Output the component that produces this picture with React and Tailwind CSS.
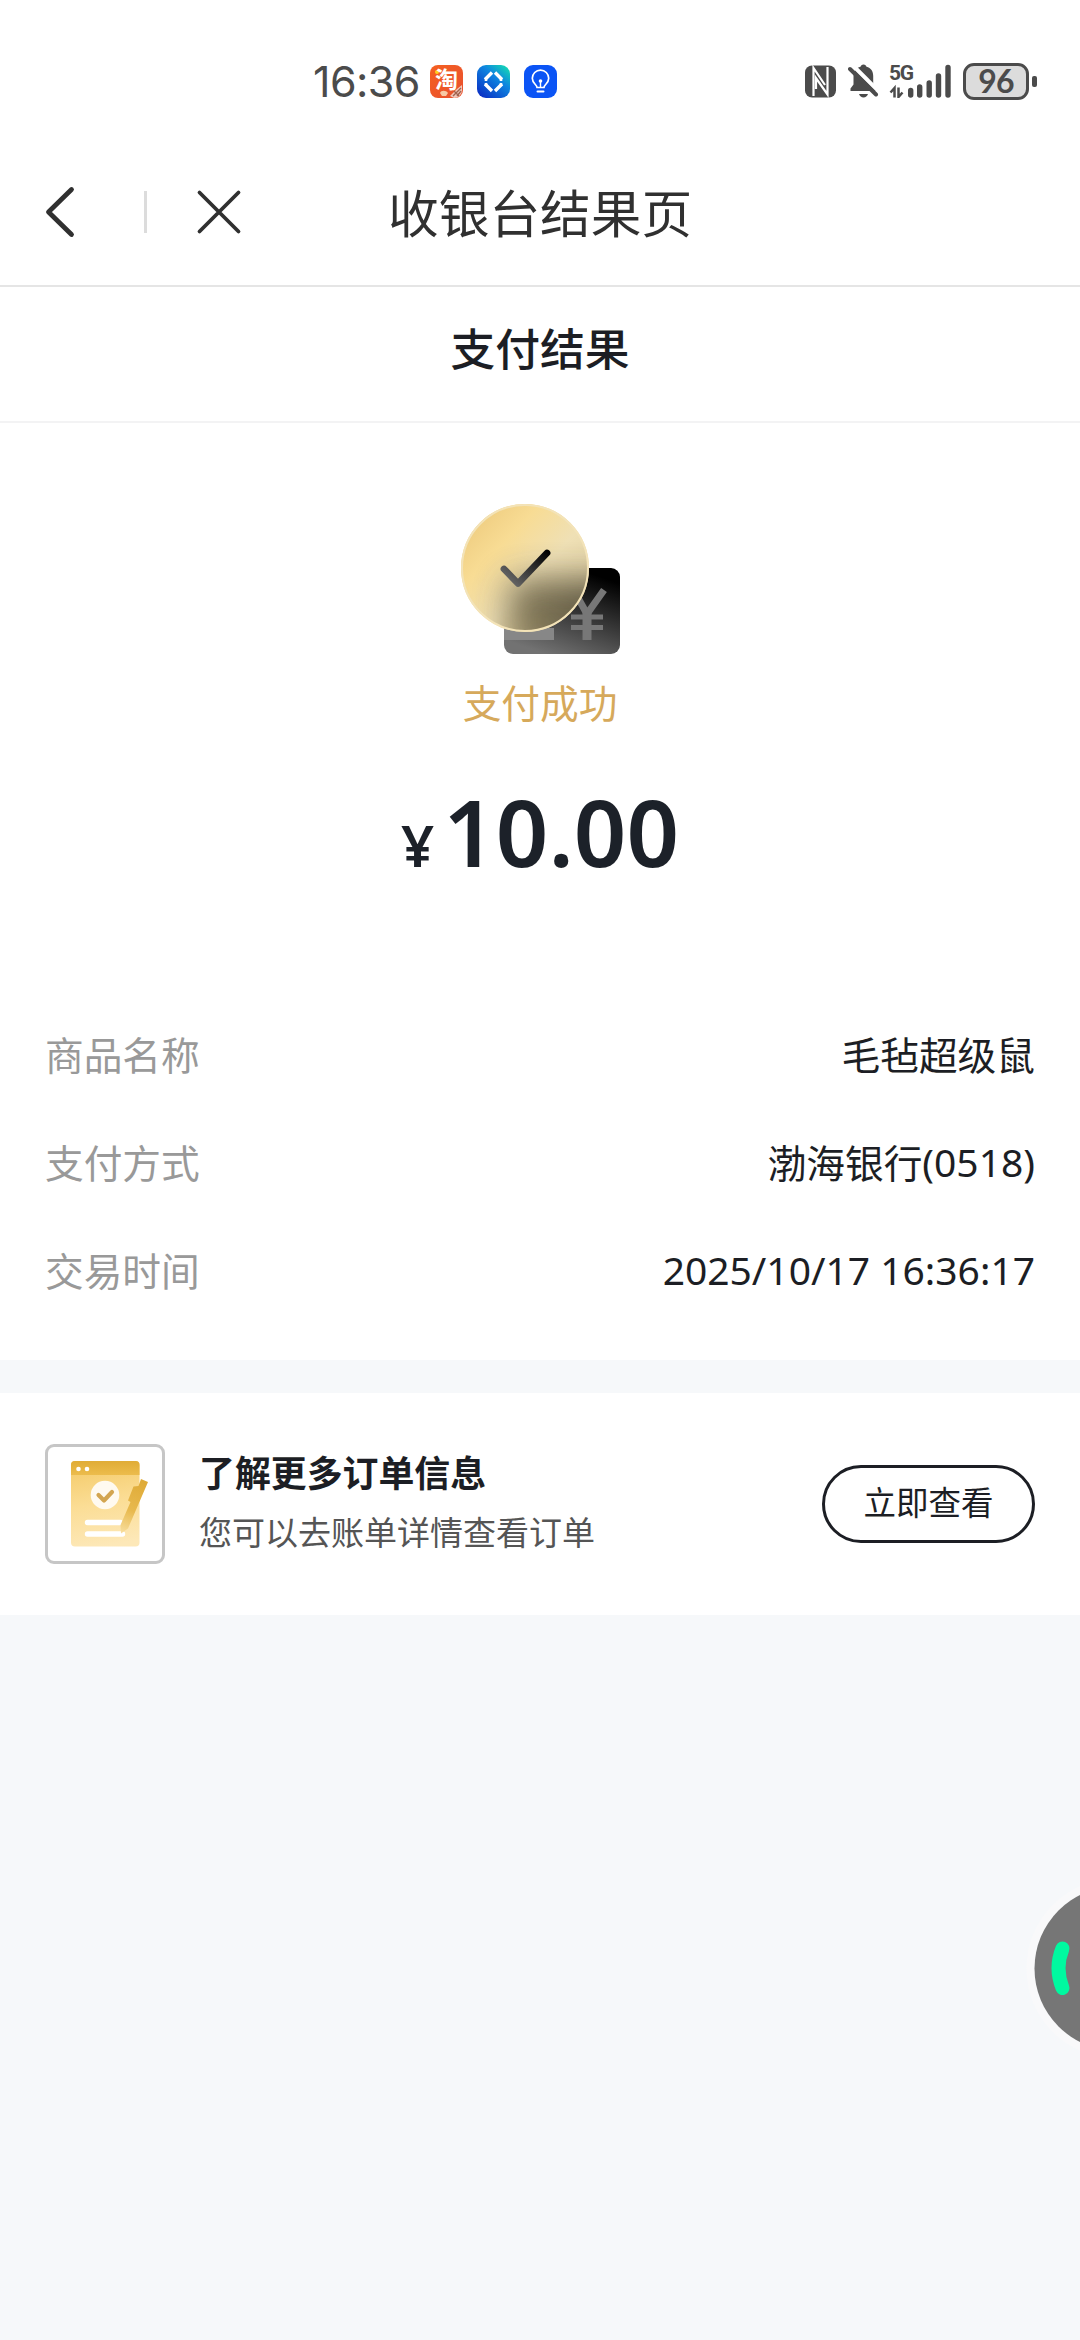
import React from 'react';

const details = [
  { label: '商品名称', value: '毛毡超级鼠' },
  { label: '支付方式', value: '渤海银行', suffix: '(0518)' },
  { label: '交易时间', suffix: '2025/10/17 16:36:17' },
];

const AppIcons = () => (
  <div className="flex items-center gap-[14px]">
    {/* Taobao */}
    <div className="relative flex items-center justify-center w-[33px] h-[33px] rounded-[8px] bg-linear-to-br from-[#f5601f] to-[#e8502f]">
      <svg className="absolute inset-0" width="33" height="33" viewBox="0 0 33 33" fill="none">
        <circle cx="7" cy="7" r="2" fill="#ffd21f" />
        <path d="M10 28c1-3 6-3 8 0l-2 3h-4z" fill="#f7c9a5" />
        <path d="M20 31l7-7 5-4v5a8 8 0 0 1-8 8z" fill="#f3c8bb" />
        <path d="M23 31l8-8M27 31l4-5M24 26l5 5" stroke="#a0634f" strokeWidth="1.4" />
      </svg>
      <span className="relative pb-[5px] text-[23px] leading-[33px] font-bold text-white">淘</span>
    </div>
    {/* Wallet app */}
    <svg width="33" height="33" viewBox="0 0 33 33" fill="none">
      <defs>
        <linearGradient id="wallet" x1="4" y1="32" x2="31" y2="0" gradientUnits="userSpaceOnUse">
          <stop stopColor="#0a2fc4" />
          <stop offset="0.6" stopColor="#0e86e0" />
          <stop offset="1" stopColor="#15e0b0" />
        </linearGradient>
      </defs>
      <rect width="33" height="33" rx="9" fill="url(#wallet)" />
      <path d="M8 14.500L15 7.500M18 7.500l7 7M25 19l-7 7M15 26l-7-7" stroke="#fff" strokeWidth="3.400" />
      <path d="M9 13v3M24 13v3M9 18v3M24 18v3" stroke="#fff" strokeWidth="2.600" />
    </svg>
    {/* Light bulb app */}
    <svg width="33" height="33" viewBox="0 0 33 33" fill="none">
      <rect width="33" height="33" rx="9" fill="#0b54f5" />
      <path
        d="M13 22.500c0-3-4.700-4-4.700-9.200a8.200 8.200 0 0 1 16.400 0c0 5.200-4.700 6.200-4.700 9.200z"
        stroke="#fff"
        strokeWidth="1.700"
        strokeLinejoin="round"
      />
      <path d="M13.500 26.500h6" stroke="#fff" strokeWidth="2" strokeLinecap="round" />
      <path d="M16.500 17v5" stroke="#fff" strokeWidth="1.400" />
      <circle cx="16.500" cy="16" r="1.800" fill="#fff" />
    </svg>
  </div>
);

const StatusBar = () => (
  <div className="flex items-center justify-between h-[142px] pt-[20px] pl-[313px] pr-[43px]">
    <div className="flex items-center gap-[11px]">
      <span className="w-[106px] whitespace-nowrap font-['Inter',sans-serif] text-[43px] leading-[50px] tracking-[-0.600px] text-[#4b4b4b]">16:36</span>
      <AppIcons />
    </div>
    <div className="flex items-center">
      {/* NFC */}
      <svg width="31" height="33" viewBox="0 0 31 33" fill="none">
        <rect y="0.500" width="31" height="32" rx="7" fill="#4b4b4b" />
        <path d="M8.500 31V3L20 20M22.500 2v27.500L11 13v11" stroke="#fff" strokeWidth="2.200" />
      </svg>
      {/* Muted bell */}
      <svg className="ml-[12px]" width="31" height="34" viewBox="0 0 31 34" fill="none">
        <path d="M15.500 0.500c1.700 0 2.700 1 3 2.300 4.500 1.200 6.700 4.600 6.700 9v8.700l3 4v2.500H2.500v-2.500l3-4v-8.700c0-4.400 2.500-7.800 7-9 .3-1.300 1.300-2.300 3-2.300z" fill="#4b4b4b" />
        <path d="M11 30h9c-.8 2.300-2.300 3.500-4.500 3.500S11.800 32.300 11 30z" fill="#4b4b4b" />
        <path d="M4 0.500L31 27.500" stroke="#fff" strokeWidth="4" />
        <path d="M2 5l26 25.500" stroke="#4b4b4b" strokeWidth="4" strokeLinecap="round" />
      </svg>
      {/* 5G + signal bars */}
      <div className="relative ml-[10px] w-[64px] h-[34px]">
        <span className="absolute left-0 top-[-2px] font-['Roboto',sans-serif] text-[21px] leading-[22px] font-bold tracking-[-1.200px] text-[#4b4b4b]">5G</span>
        <svg width="64" height="34" viewBox="0 0 64 34" fill="none" stroke="#4b4b4b">
          <path d="M1.500 28.500L5.500 24v9.500M9.500 23.500v9.500l4-4.500" strokeWidth="2.500" />
          <path d="M21.700 26.500v4.500M30.700 23v8M40.200 19v12M49.500 12v19M59 3.500v27.500" strokeWidth="5.400" strokeLinecap="round" />
        </svg>
      </div>
      {/* Battery */}
      <div className="ml-[10px] flex items-center gap-[3px]">
        <div className="flex items-center justify-center w-[66px] h-[37px] rounded-[11px] border-[3px] border-[#4b4b4b] bg-[#dcdcdc]">
          <span className="pb-[2px] font-['Lato',sans-serif] text-[32px] leading-[31px] font-bold tracking-[-0.800px] text-[#4b4b4b]">96</span>
        </div>
        <div className="w-[5px] h-[11px] rounded-[2px] bg-[#4b4b4b]"></div>
      </div>
    </div>
  </div>
);

const Header = () => (
  <header className="grid grid-cols-[388px_304px_388px] items-center h-[145px] pb-[3px] border-b-2 border-[#e5e5e5]">
    <div className="flex items-center pl-[44px]">
      <svg width="32" height="54" viewBox="0 0 32 54" fill="none">
        <path d="M27.500 4.500L4.500 27l23 22.500" stroke="#303030" strokeWidth="4.800" strokeLinecap="round" strokeLinejoin="round" />
      </svg>
      <div className="ml-[68px] w-[3px] h-[42px] bg-[#dcdcdc]"></div>
      <svg className="ml-[49px]" width="46" height="46" viewBox="0 0 46 46" fill="none">
        <path d="M3.500 3.500l39 39M42.500 3.500l-39 39" stroke="#303030" strokeWidth="3.800" strokeLinecap="round" />
      </svg>
    </div>
    <h1 className="pb-[3px] text-center whitespace-nowrap text-[50.700px] leading-[60px] text-[#303030]">收银台结果页</h1>
  </header>
);

const SuccessIcon = () => (
  <svg width="164" height="160" viewBox="458 500 164 160" fill="none">
    <defs>
      <linearGradient id="card" x1="575" y1="568" x2="545" y2="654" gradientUnits="userSpaceOnUse">
        <stop stopColor="#000" />
        <stop offset="1" stopColor="#727272" />
      </linearGradient>
      <linearGradient id="coin" x1="480" y1="520" x2="575" y2="610" gradientUnits="userSpaceOnUse">
        <stop stopColor="#f0cf83" />
        <stop offset="0.250" stopColor="#f8dc94" />
        <stop offset="0.600" stopColor="#efe0b5" />
        <stop offset="1" stopColor="#e0d0a4" />
      </linearGradient>
      <linearGradient id="shade" x1="585" y1="580" x2="520" y2="640" gradientUnits="userSpaceOnUse">
        <stop stopColor="#4a4534" />
        <stop offset="1" stopColor="#857a58" />
      </linearGradient>
      <linearGradient id="tick" x1="548" y1="552" x2="516" y2="588" gradientUnits="userSpaceOnUse">
        <stop stopColor="#000" />
        <stop offset="1" stopColor="#666" />
      </linearGradient>
      <filter id="soft" x="-60%" y="-60%" width="220%" height="220%">
        <feGaussianBlur stdDeviation="17" />
      </filter>
      <clipPath id="coinClip">
        <circle cx="525" cy="568" r="63" />
      </clipPath>
    </defs>
    <rect x="504" y="568" width="116" height="86" rx="9" fill="url(#card)" />
    <rect x="504" y="628" width="50" height="12" fill="#878787" />
    <path d="M573.500 590l13.500 24 17-24" stroke="#777" strokeWidth="7" />
    <path d="M571 617h32M571 627.500h32" stroke="#777" strokeWidth="5" />
    <path d="M587 610v30" stroke="#777" strokeWidth="9" />
    <circle cx="525" cy="568" r="64" fill="url(#coin)" />
    {/* frosted shadow of the card seen through the coin */}
    <g clipPath="url(#coinClip)">
      <rect x="508" y="580" width="125" height="80" rx="9" fill="url(#shade)" opacity="0.900" filter="url(#soft)" />
    </g>
    <circle cx="525" cy="568" r="63" stroke="#f3e3b8" strokeWidth="2" />
    <path d="M504 569l14 14.500L547 553" stroke="url(#tick)" strokeWidth="6.800" strokeLinecap="round" strokeLinejoin="round" />
  </svg>
);

const BillIcon = () => (
  <svg width="114" height="114" viewBox="48 1447 114 114" fill="none">
    <defs>
      <linearGradient id="sheet" x1="90" y1="1461" x2="105" y2="1546" gradientUnits="userSpaceOnUse">
        <stop stopColor="#f4ca67" />
        <stop offset="0.500" stopColor="#fbdd95" />
        <stop offset="1" stopColor="#fde8b8" />
      </linearGradient>
      <linearGradient id="bar" x1="105" y1="1461" x2="105" y2="1475" gradientUnits="userSpaceOnUse">
        <stop stopColor="#e0ac36" />
        <stop offset="1" stopColor="#ecbc4c" />
      </linearGradient>
      <linearGradient id="pen" x1="142" y1="1482" x2="123" y2="1534" gradientUnits="userSpaceOnUse">
        <stop stopColor="#dfab38" />
        <stop offset="0.550" stopColor="#e8b94e" />
        <stop offset="1" stopColor="#f8dfa0" />
      </linearGradient>
    </defs>
    <rect x="71" y="1461" width="68.500" height="85.500" rx="4" fill="url(#sheet)" />
    <path d="M71 1475v-10a4 4 0 0 1 4-4h60.500a4 4 0 0 1 4 4v10z" fill="url(#bar)" />
    <circle cx="78.500" cy="1469" r="2.300" fill="#fff" />
    <circle cx="87" cy="1469" r="2.300" fill="#fff" />
    <circle cx="105" cy="1495" r="14.300" fill="#fffaf0" />
    <path d="M98.500 1495l5.500 5.500 8-8.500" stroke="#d3a550" strokeWidth="4.200" strokeLinecap="round" strokeLinejoin="round" />
    <path d="M87.500 1522.500h33M87.500 1534h35" stroke="#fff" strokeWidth="5.400" strokeLinecap="round" />
    <path d="M141 1479l7 3-20 46.500-7 5-.500-8.500 10-23-2.500-1.500 5.500-14 5-.500z" fill="url(#pen)" />
  </svg>
);

const DetailRow = ({ label, value, suffix }) => (
  <div className="flex items-center justify-between h-[108px] text-[38.700px] leading-[56px]">
    <span className="text-[#999999]">{label}</span>
    <span className="flex items-center text-[#1c1e24]">
      {value && <span>{value}</span>}
      {suffix && <span className="pt-[2px] font-['Noto_Sans',sans-serif] text-[39px]">{suffix}</span>}
    </span>
  </div>
);

const App = () => {
  return (
    <div lang="zh-CN" className="relative w-[1080px] h-[2340px] overflow-hidden bg-[#f6f8fa] font-['Noto_Sans_CJK_SC',sans-serif]">
      <div className="bg-white">
        <StatusBar />
        <Header />
        <div className="flex items-center justify-center h-[136px] pb-[14px] border-b-2 border-[#f3f3f4]">
          <h2 className="text-[44.800px] leading-[60px] font-medium text-[#1c1e24]">支付结果</h2>
        </div>

        {/* Result */}
        <div className="flex flex-col items-center h-[576px] pt-[77px]">
          <SuccessIcon />
          <p className="mt-[13px] text-[38.700px] leading-[56px] text-[#d6a95b]">支付成功</p>
          <p className="mt-[53px] flex items-baseline font-['Noto_Sans',sans-serif] font-semibold leading-[100px] text-[#1c2129]">
            <span className="text-[58px]">¥</span>
            <span className="ml-[9px] text-[92px]">10.00</span>
          </p>
        </div>

        {/* Order details */}
        <div className="h-[361px] px-[45px]">
          {details.map((row) => (
            <DetailRow key={row.label} {...row} />
          ))}
        </div>
      </div>

      {/* Bill entry */}
      <div className="mt-[33px] flex items-center h-[222px] px-[45px] bg-white">
        <div className="flex items-center justify-center w-[120px] h-[120px] rounded-[9px] border-[3px] border-[#c6c6c6] shrink-0">
          <BillIcon />
        </div>
        <div className="ml-[34px] flex-1 pb-[7px]">
          <p className="text-[35.900px] leading-[52px] font-bold text-[#1c1e24]">了解更多订单信息</p>
          <p className="mt-[9px] text-[33px] leading-[50px] text-[#555555]">您可以去账单详情查看订单</p>
        </div>
        <button className="w-[213px] h-[78px] rounded-full border-[3px] border-[#1c1e24] pb-[7px] text-[32.500px] leading-[50px] text-[#1c1e24]">
          立即查看
        </button>
      </div>

      {/* Floating assistant, half hidden behind the screen edge */}
      <svg className="absolute right-0 top-[1880px]" width="60" height="176" viewBox="1020 1880 60 176" fill="none">
        <circle cx="1116.500" cy="1968.500" r="90" fill="#f9f9fa" />
        <circle cx="1116.500" cy="1968.500" r="82" fill="#767676" />
        <path d="M1062.500 1948.500q-8 19.500 0 39.500" stroke="#00f9a0" strokeWidth="14" strokeLinecap="round" />
      </svg>
    </div>
  );
};

export default App;
